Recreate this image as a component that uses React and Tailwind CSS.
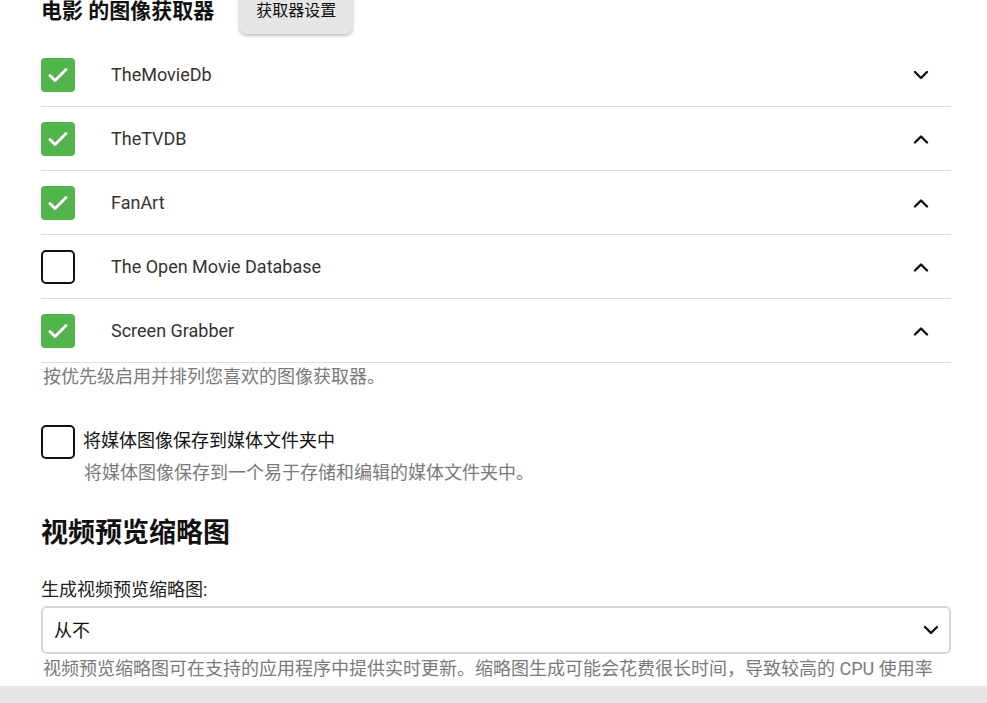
import React from "react";

const font = { fontFamily: 'Roboto, "Noto Sans CJK SC", sans-serif' };

function Check() {
  return (
    <svg width="24" height="24" viewBox="0 0 24 24" fill="none">
      <path d="M4 12.5l5 5L20 6.5" stroke="white" strokeWidth="3" strokeLinecap="round" strokeLinejoin="round" />
    </svg>
  );
}

function Chevron({ up }) {
  return (
    <svg width="16" height="10" viewBox="0 0 16 10" fill="none">
      <path
        d={up ? "M2 8.5L8 2.5l6 6" : "M2 2L8 8l6-6"}
        stroke="#111"
        strokeWidth="2.4"
        strokeLinecap="round"
        strokeLinejoin="round"
      />
    </svg>
  );
}

function Box({ checked }) {
  return checked ? (
    <div className="w-[34px] h-[34px] rounded-[4px] bg-[#52b54b] flex items-center justify-center shrink-0">
      <Check />
    </div>
  ) : (
    <div className="w-[34px] h-[34px] rounded-[5px] border-2 border-[#111] shrink-0" />
  );
}

const rows = [
  { name: "TheMovieDb", checked: true, up: false },
  { name: "TheTVDB", checked: true, up: true },
  { name: "FanArt", checked: true, up: true },
  { name: "The Open Movie Database", checked: false, up: true },
  { name: "Screen Grabber", checked: true, up: true },
];

export default function App() {
  return (
    <div className="min-h-[703px] bg-white text-[#202020] overflow-hidden" style={font}>
      <div className="mt-[-12px] ml-[41px] w-[910px]">
        <div className="h-[46px] flex items-center">
          <h2 className="text-[21px] font-bold leading-[26px] text-[#111]">电影 的图像获取器</h2>
          <button className="ml-[25px] w-[114px] h-[46px] rounded-[8px] bg-[#e6e6e6] shadow-[0_2px_3px_rgba(0,0,0,0.25)] text-[16px] text-[#111] flex items-center justify-center">
            获取器设置
          </button>
        </div>
        <div className="mt-[9px]">
          {rows.map((r) => (
            <div key={r.name} className="h-[64px] border-b border-[#dcdcdc] flex items-center">
              <Box checked={r.checked} />
              <span className="ml-[36px] text-[18px] text-[#333] flex-1 mt-[-1px]">{r.name}</span>
              <div className="w-[60px] flex items-center justify-center">
                <Chevron up={r.up} />
              </div>
            </div>
          ))}
        </div>
        <p className="ml-[2px] mt-[2px] text-[18px] leading-[24px] text-[#7a7a7a]">按优先级启用并排列您喜欢的图像获取器。</p>

        <div className="mt-[36px] flex items-center">
          <Box checked={false} />
          <span className="ml-[8px] text-[18px] text-[#111] mt-[-4px]">将媒体图像保存到媒体文件夹中</span>
        </div>
        <p className="ml-[43px] mt-[2px] text-[18px] leading-[24px] text-[#7a7a7a]">将媒体图像保存到一个易于存储和编辑的媒体文件夹中。</p>

        <h2 className="mt-[30px] text-[27px] font-bold leading-[36px] text-[#111]">视频预览缩略图</h2>

        <label className="block mt-[27px] text-[18px] leading-[24px] text-[#222]">生成视频预览缩略图:</label>
        <div className="mt-[4px] h-[48px] border-2 border-[#d6d6d6] rounded-[6px] flex items-center pl-[11px] pr-[10px]">
          <span className="flex-1 text-[18px] text-[#111]">从不</span>
          <Chevron up={false} />
        </div>
        <p className="ml-[2px] mt-[3px] text-[18px] leading-[24px] text-[#7a7a7a] whitespace-nowrap">
          视频预览缩略图可在支持的应用程序中提供实时更新。缩略图生成可能会花费很长时间，导致较高的 CPU 使用率
        </p>
      </div>
      <div className="fixed left-0 right-0 bottom-0 h-[17px] bg-[#e6e6e6]" />
    </div>
  );
}
